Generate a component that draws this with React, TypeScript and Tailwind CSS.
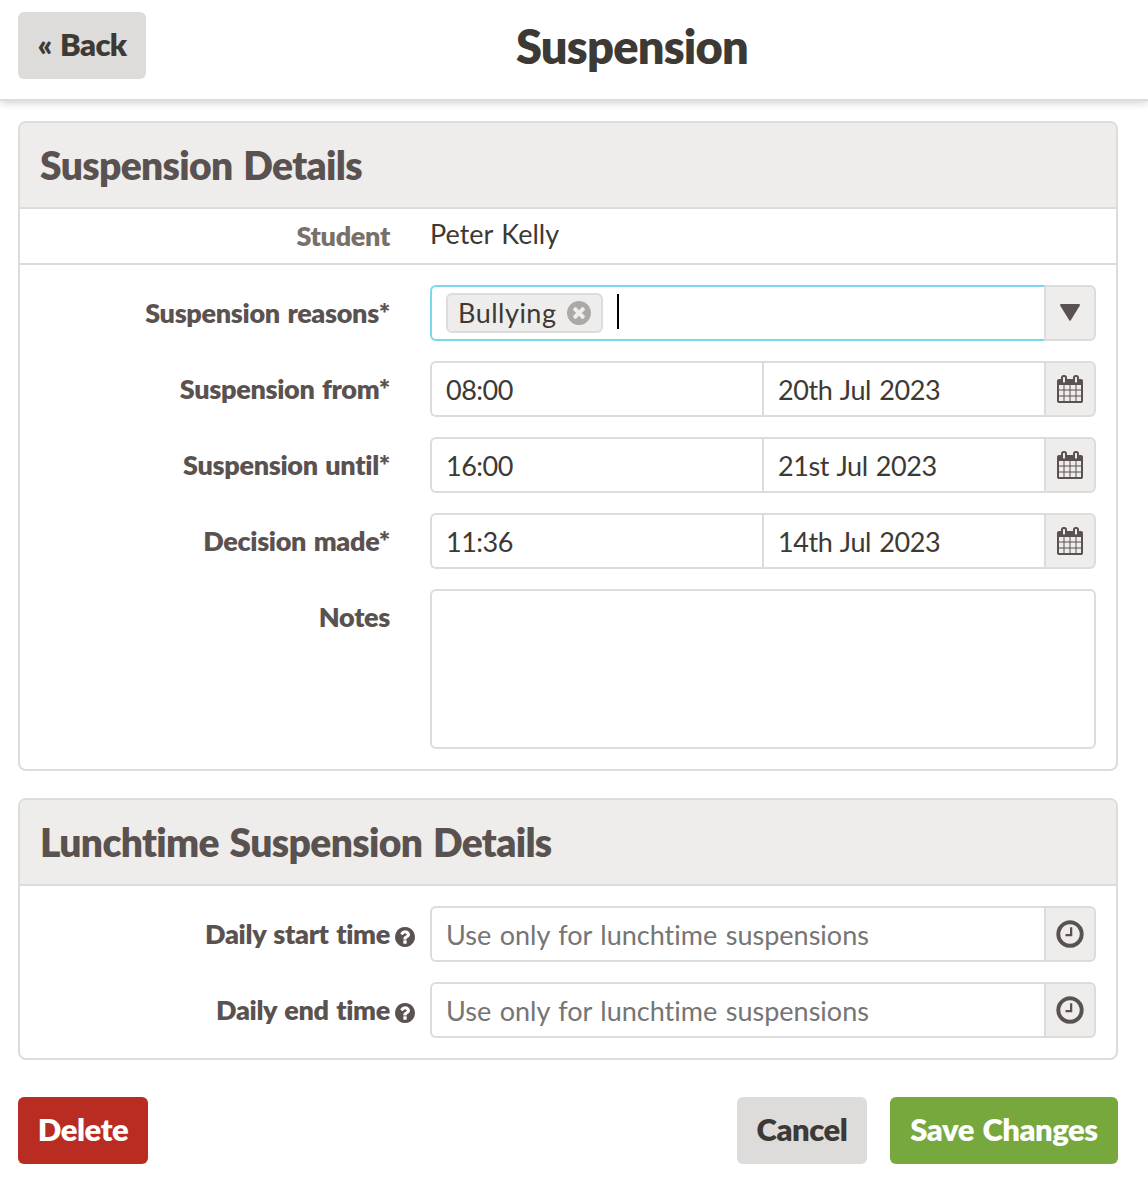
import React, { useState } from 'react';

const CalendarIcon: React.FC = () => (
    <svg viewBox="0 0 1792 1792" className="h-7 w-7 fill-[#5a5250]">
        <path d="M192 1664h288v-288h-288v288zm352 0h320v-288h-320v288zm-352-352h288v-320h-288v320zm352 0h320v-320h-320v320zm-352-384h288v-288h-288v288zm736 736h320v-288h-320v288zm-384-736h320v-288h-320v288zm768 736h288v-288h-288v288zm-384-352h320v-320h-320v320zm-352-864v-288q0-13-9.500-22.500t-22.500-9.500h-64q-13 0-22.500 9.500t-9.500 22.500v288q0 13 9.500 22.500t22.500 9.500h64q13 0 22.500-9.500t9.500-22.500zm736 864h288v-320h-288v320zm-384-384h320v-288h-320v288zm384 0h288v-288h-288v288zm32-480v-288q0-13-9.500-22.500t-22.500-9.500h-64q-13 0-22.500 9.500t-9.500 22.500v288q0 13 9.500 22.500t22.500 9.500h64q13 0 22.500-9.500t9.500-22.500zm384-64v1280q0 52-38 90t-90 38h-1408q-52 0-90-38t-38-90v-1280q0-52 38-90t90-38h128v-96q0-66 47-113t113-47h64q66 0 113 47t47 113v96h384v-96q0-66 47-113t113-47h64q66 0 113 47t47 113v96h128q52 0 90 38t38 90z" />
    </svg>
);

const ClockIcon: React.FC = () => (
    <svg viewBox="0 0 1792 1792" className="h-8 w-8 fill-[#5a5250]">
        <path d="M1024 544v448q0 14-9 23t-23 9h-320q-14 0-23-9t-9-23v-64q0-14 9-23t23-9h224v-352q0-14 9-23t23-9h64q14 0 23 9t9 23zm416 352q0-148-73-273t-198-198-273-73-273 73-198 198-73 273 73 273 198 198 273 73 273-73 198-198 73-273zm224 0q0 209-103 385.500t-279.500 279.500-385.500 103-385.500-103-279.500-279.500-103-385.500 103-385.500 279.500-279.500 385.500-103 385.500 103 279.500 279.500 103 385.500z" />
    </svg>
);

const RemoveIcon: React.FC = () => (
    <svg viewBox="128 128 1536 1536" className="h-6 w-6 fill-[#aca8a5]">
        <path d="M1277 1122q0-26-19-45l-181-181 181-181q19-19 19-45 0-27-19-46l-90-90q-19-19-46-19-26 0-45 19l-181 181-181-181q-19-19-45-19-27 0-46 19l-90 90q-19 19-19 46 0 26 19 45l181 181-181 181q-19 19-19 45 0 27 19 46l90 90q19 19 46 19 26 0 45-19l181-181 181 181q19 19 45 19 27 0 46-19l90-90q19-19 19-46zm387-226q0 209-103 385.500t-279.500 279.500-385.500 103-385.500-103-279.500-279.500-103-385.500 103-385.500 279.500-279.500 385.500-103 385.500 103 279.500 279.500 103 385.500z" />
    </svg>
);

const HelpIcon: React.FC = () => (
    <svg viewBox="128 128 1536 1536" className="h-5 w-5 fill-[#5a5250]">
        <path d="M1024 1376v-192q0-14-9-23t-23-9h-192q-14 0-23 9t-9 23v192q0 14 9 23t23 9h192q14 0 23-9t9-23zm256-672q0-88-55.500-163t-138.500-116-170-41q-243 0-371 213-15 24 8 42l132 100q7 6 19 6 16 0 25-12 53-68 86-92 34-24 86-24 48 0 85.500 26t37.500 59q0 38-20 61t-68 45q-63 28-115.500 86.500t-52.500 125.500v36q0 14 9 23t23 9h192q14 0 23-9t9-23q0-19 21.500-49.500t54.500-49.500q32-18 49-28.500t46-35 44.500-48 28-60.500 12.500-81zm384 192q0 209-103 385.500t-279.500 279.500-385.500 103-385.500-103-279.500-279.500-103-385.500 103-385.500 279.500-279.500 385.500-103 385.500 103 279.500 279.500 103 385.500z" />
    </svg>
);

const ArrowIcon: React.FC = () => (
    <svg viewBox="0 0 20 17" className="mr-px mb-px h-[17px] w-5 fill-[#5a5250]">
        <path d="M1 0h18q1.400 .3.700 1.700L10.800 16.300q-.8 1.100-1.600 0L.3 1.700Q-.4.300 1 0z" />
    </svg>
);

const Addon: React.FC<{ children: React.ReactNode }> = ({ children }) => (
    <button type="button" className="flex w-[52px] shrink-0 items-center justify-center rounded-r-md border-2 border-[#dcdcdc] bg-[#eeedeb]">
        {children}
    </button>
);

const Card: React.FC<{ title: string, children: React.ReactNode }> = ({ title, children }) => (
    <section className="overflow-hidden rounded-lg border-2 border-[#dcdcdc]">
        <h2 className="flex h-[86px] items-center border-b-2 border-[#dcdcdc] bg-[#eeedeb] pl-5 text-[39px] font-extrabold tracking-[-0.017em] text-[#5a5250]">
            {title}
        </h2>
        {children}
    </section>
);

const Row: React.FC<{ label: string, help?: boolean, children: React.ReactNode }> = ({ label, help, children }) => (
    <div className="flex pr-5">
        <label className="flex h-14 w-[370px] shrink-0 items-center justify-end text-[27px] font-extrabold tracking-[-0.012em] text-[#5a5250]">
            {label}
        </label>
        <div className="w-10 shrink-0 pt-[21px] pl-[5px]">{help && <HelpIcon />}</div>
        <div className="flex min-w-0 flex-1">{children}</div>
    </div>
);

const DateTimeRow: React.FC<{ label: string, time: string, date: string }> = ({ label, time, date }) => {
    const [timeValue, setTimeValue] = useState<string>(time);
    const [dateValue, setDateValue] = useState<string>(date);

    return (
        <Row label={label}>
            <input
                className="h-14 w-[332px] rounded-l-md border-2 border-r-0 border-[#dcdcdc] pl-3.5 tracking-[-0.5px] outline-none"
                value={timeValue}
                onChange={e => setTimeValue(e.target.value)}
            />
            <input
                className="h-14 min-w-0 flex-1 border-2 border-r-0 border-[#dcdcdc] pl-3.5 tracking-[-0.4px] outline-none"
                value={dateValue}
                onChange={e => setDateValue(e.target.value)}
            />
            <Addon><CalendarIcon /></Addon>
        </Row>
    );
};

const LunchRow: React.FC<{ label: string }> = ({ label }) => (
    <Row label={label} help>
        <input
            className="h-14 min-w-0 flex-1 rounded-l-md border-2 border-r-0 border-[#dcdcdc] pl-3.5 outline-none placeholder:text-[#757575]"
            placeholder="Use only for lunchtime suspensions"
        />
        <Addon><ClockIcon /></Addon>
    </Row>
);

const App: React.FC = () => {
    const [reasons, setReasons] = useState<string[]>(['Bullying']);
    const [notes, setNotes] = useState<string>('');

    return (
        <div className="h-[1178px] bg-white font-['Lato','Noto_Sans',sans-serif] text-[27px] text-[#3d3935] [font-variant-ligatures:none] **:[word-spacing:0.06em]">
            <header className="flex h-[101px] border-b-2 border-[#dcdcdc] pt-3 pl-[18px] shadow-[0_2px_8px_rgba(0,0,0,0.18)]">
                <button type="button" className="h-[67px] w-32 rounded-md bg-[#dddcda] pb-0.5 text-[31px] font-extrabold tracking-[-0.02em]">« Back</button>
                <h1 className="flex h-[68px] flex-1 items-center justify-center pr-[30px] text-[47px] font-extrabold tracking-[-0.017em]">Suspension</h1>
            </header>

            <main className="flex flex-col gap-[27px] pt-5 pr-[30px] pl-[18px]">
                <Card title="Suspension Details">
                    <div className="flex h-14 border-b-2 border-[#dcdcdc]">
                        <span className="w-[370px] pt-[7px] text-right leading-10 font-extrabold tracking-[-0.012em] text-[#787069]">Student</span>
                        <span className="pt-[5px] pl-10 leading-10">Peter Kelly</span>
                    </div>
                    <div className="flex flex-col gap-5 py-5">
                        <Row label="Suspension reasons*">
                            <div className="flex h-14 min-w-0 flex-1 items-center rounded-l-md border-2 border-r-0 border-[#77d8f0] pl-3.5">
                                {reasons.map(r => (
                                    <span key={r} className="flex h-10 w-[157px] items-center justify-between rounded-md border-2 border-[#dcdcdc] bg-[#eeedeb] pr-2.5 pl-2.5 tracking-[0.5px]">
                                        {r}
                                        <button type="button" onClick={() => setReasons(reasons.filter(x => x !== r))}>
                                            <RemoveIcon />
                                        </button>
                                    </span>
                                ))}
                                <span className="mb-1 ml-3.5 h-[35px] w-0.5 bg-black" />
                            </div>
                            <Addon><ArrowIcon /></Addon>
                        </Row>
                        <DateTimeRow label="Suspension from*" time="08:00" date="20th Jul 2023" />
                        <DateTimeRow label="Suspension until*" time="16:00" date="21st Jul 2023" />
                        <DateTimeRow label="Decision made*" time="11:36" date="14th Jul 2023" />
                        <Row label="Notes">
                            <textarea
                                className="h-40 w-full resize-none rounded-md border-2 border-[#dcdcdc] px-3.5 py-2 outline-none"
                                value={notes}
                                onChange={e => setNotes(e.target.value)}
                            />
                        </Row>
                    </div>
                </Card>

                <Card title="Lunchtime Suspension Details">
                    <div className="flex flex-col gap-5 py-5">
                        <LunchRow label="Daily start time" />
                        <LunchRow label="Daily end time" />
                    </div>
                </Card>
            </main>

            <footer className="flex pt-[37px] pr-[30px] pl-[18px] text-[31px] font-extrabold">
                <button type="button" className="h-[67px] w-[130px] rounded-md bg-[#b92c22] pb-0.5 tracking-[-0.015em] text-white">Delete</button>
                <button type="button" className="mr-[23px] ml-auto h-[67px] w-[130px] rounded-md bg-[#dddcda] pb-0.5 tracking-[-0.015em]">Cancel</button>
                <button type="button" className="h-[67px] w-[228px] rounded-md bg-[#77a83d] pb-0.5 tracking-[-0.015em] text-white">Save Changes</button>
            </footer>
        </div>
    );
};

export default App;
